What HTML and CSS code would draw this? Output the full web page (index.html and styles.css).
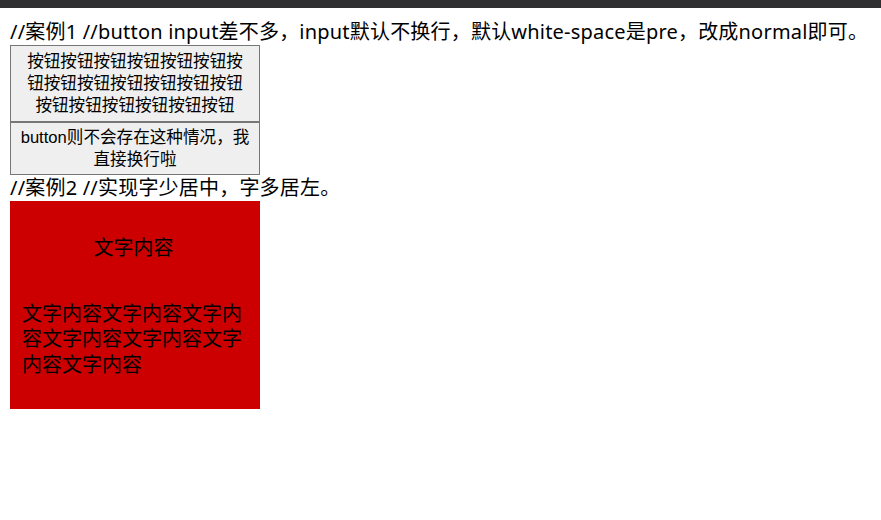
FILE: index.html
```html
<!DOCTYPE html>
<html lang="zh-CN">
<head>
<meta charset="utf-8">
<title>button input</title>
<link rel="stylesheet" href="styles.css">
</head>
<body>
<div class="topbar"></div>
<main class="page">
  <div class="line">//案例1 //button input差不多，input默认不换行，默认white-space是pre，改成normal即可。</div>
  <input class="btn btn-input" type="button" value="按钮按钮按钮按钮按钮按钮按钮按钮按钮按钮按钮按钮按钮按钮按钮按钮按钮按钮按钮">
  <button class="btn btn-button" type="button">button则不会存在这种情况，我直接换行啦</button>
  <div class="line">//案例2 //实现字少居中，字多居左。</div>
  <div class="box">
    <p class="box-text short">文字内容</p>
    <p class="box-text long">文字内容文字内容文字内容文字内容文字内容文字内容文字内容</p>
  </div>
</main>
</body>
</html>
```
FILE: styles.css
```css
html, body {
  margin: 0;
  padding: 0;
  background: #ffffff;
}
body {
  font-family: "Noto Sans", "Noto Sans CJK SC", sans-serif;
  color: #000;
}
.topbar {
  height: 8px;
  background: #2f2f31;
}
.page {
  padding: 11px 0 0 10px;
}
.line {
  font-size: 20px;
  line-height: 26px;
  letter-spacing: 0.2px;
  white-space: nowrap;
}
.btn {
  display: block;
  width: 250px;
  margin: 0;
  padding: 0 9px;
  box-sizing: border-box;
  font-family: "Liberation Sans", "Noto Sans CJK SC", sans-serif;
  font-size: 16.6px;
  line-height: 22px;
  color: #000;
  background: #efefef;
  border: 1px solid #767676;
  border-radius: 0;
  text-align: center;
  white-space: normal;
}
.btn-input {
  height: 77px;
}
.btn-button {
  height: 53px;
}
.box {
  width: 250px;
  height: 208px;
  box-sizing: border-box;
  padding: 33px 15px 0 12px;
  background: #cc0000;
  text-align: center;
}
.box-text {
  display: inline-block;
  text-align: left;
  margin: 0;
  font-size: 20px;
  line-height: 25.5px;
  font-family: "Noto Sans CJK SC", sans-serif;
}
.short {
  margin-bottom: 40px;
}
```
